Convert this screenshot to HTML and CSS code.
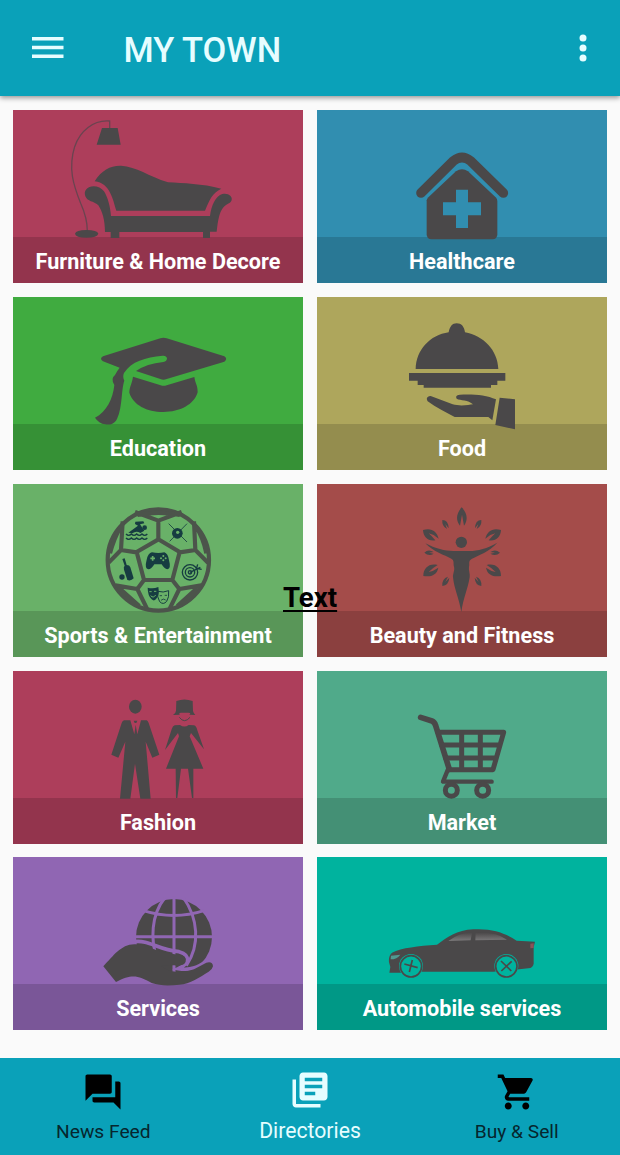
FILE: index.html
```html
<!DOCTYPE html>
<html lang="en">
<head>
  <meta charset="UTF-8">
  <title>My Town</title>
  <meta name="viewport" content="width=device-width, initial-scale=1.0">
  <link rel="stylesheet" href="styles.css">
</head>
<body>
  <header class="app-bar">
    <svg class="menu-icon" viewBox="0 0 32 22"><path d="M0 0h31.500v3.500H0zM0 8.800h31.500v3.500H0zM0 17.600h31.500v3.500H0z"/></svg>
    <h1>MY TOWN</h1>
    <svg class="more-icon" viewBox="0 0 8 28"><circle cx="4" cy="4" r="3.5"/><circle cx="4" cy="14" r="3.5"/><circle cx="4" cy="24" r="3.5"/></svg>
  </header>

  <main class="grid">
    <a class="tile crimson">
      <span class="label">Furniture &amp; Home Decore</span>
      <svg viewBox="9 15 870 519">
        <path class="line lamp-arm" d="M299 70V48C250 44 210 78 194 125C174 190 190 240 212 295Q232 340 232 378"/>
        <path d="M276 69H323L332 119H260ZM195 386Q198 375 229 375Q262 375 265 386Q262 398 229 398Q197 398 195 386Z"/>
        <path d="M254 229C275 195 302 181 333 182C380 185 415 213 474 232C520 235 575 236 634 251C607 263 598 285 585 317H319C309 286 301 234 254 229Z"/>
        <path d="M229 253C240 238 270 241 282 259C293 276 301 305 303 333H600C604 300 617 273 637 267C655 263 668 274 665 285C662 296 650 296 641 306C628 320 624 345 620 380H600V399H579V381H328V399H302V381H285C285 345 277 319 265 301C250 287 233 291 226 274C223 266 224 258 229 253Z"/>
      </svg>
    </a>

    <a class="tile blue">
      <span class="label">Healthcare</span>
      <svg viewBox="21 15 870 519">
        <path class="line" stroke-width="29" stroke-linecap="round" stroke-linejoin="round" d="M333 264L430 168Q456 147 482 168L580 264"/>
        <path d="M350 286Q351 281 355 277L438 199Q456 186 474 199L557 277Q562 282 562 288V388Q562 403 547 403H365Q350 403 350 388Z"/>
        <path class="cut" d="M438 254H474V292H513V331H474V369H438V331H399V292H438Z"/>
      </svg>
    </a>

    <a class="tile green">
      <span class="label">Education</span>
      <svg viewBox="9 21 870 519">
        <path d="M451 145Q460 141 470 145L643 199Q654 207 643 215L470 267Q460 271 451 267L378 243Q410 221 460 216Q471 214 471 205Q469 196 458 197C405 203 365 213 342 249Q337 260 343 272C333 300 338 360 318 392Q305 407 286 403Q266 400 255 383C290 366 309 325 313 285Q301 266 315 255Q323 240 329 233L279 214Q267 207 279 199Z"/>
        <path d="M369 260L452 286Q461 289 470 286L553 261C556 282 563 285 563 307C552 344 510 366 460 366C410 366 369 344 358 308C358 290 366 282 369 260Z"/>
      </svg>
    </a>

    <a class="tile olive">
      <span class="label">Food</span>
      <svg viewBox="21 21 870 519">
        <path d="M317 237C318 180 360 135 416 127C419 110 427 100 440 100C454 100 463 110 465 127C520 137 563 180 565 237ZM297 249H586V272H562V285H543V293H341V285H323V272H297Z"/>
        <path d="M353 334Q345 320 362 318L428 343C449 349 477 345 489 343C475 329 451 332 440 326Q434 316 450 314C490 312 528 315 558 328L547 391L535 381H434C409 367 378 353 353 334ZM569 323L615 328V418L556 405Z"/>
      </svg>
    </a>

    <a class="tile lightgreen">
      <span class="label">Sports &amp; Entertainment</span>
      <svg viewBox="-201 -18 870 519">
        <g class="line" stroke-width="12.5">
          <circle cx="235" cy="210" r="152"/>
          <path d="M235 148L299 186L277 270H192L170 186ZM235 148V92L165 66M235 92L305 66M128 94L123 180L170 187M123 180L86 218M342 94L346 180L299 187M346 180L384 218M192 270L172 297L106 286M172 297L201 356M277 270L298 297L364 286M298 297L269 356M123 108Q102 145 90 190M347 108Q370 145 379 190M172 75Q235 62 300 75M115 292L178 348M354 292L292 348"/>
        </g>
        <g class="sport">
          <path d="M145 128L174 107L165 102L166 95L190 94L193 100L180 103L193 122L181 129Q169 121 157 130Z"/><circle cx="194" cy="113" r="7"/>
          <path class="thin" d="M138 132q8 8 16 0q8 8 16 0q8 8 16 0q8 8 16 0M138 144q8 8 16 0q8 8 16 0q8 8 16 0q8 8 16 0"/>
          <circle cx="292" cy="130" r="16"/><path class="hair" d="M266 101L321 156M321 101L269 154"/><circle class="dot" cx="293" cy="127" r="5"/>
          <path d="M216 187Q235 191 253 187Q264 190 267 211Q274 236 262 238Q253 237 245 223H223Q214 238 205 238Q193 235 200 209Q204 190 216 187Z"/>
          <path class="pad" d="M218 198v14M211 205h14"/><g class="dot"><circle cx="250" cy="198" r="3"/><circle cx="250" cy="211" r="3"/><circle cx="243" cy="205" r="3"/><circle cx="257" cy="205" r="3"/></g>
          <path d="M127 207L134 205L140 225Q149 225 151 232L161 265Q153 274 142 270L132 239Q130 230 134 227Z"/><circle cx="126" cy="261" r="8"/>
          <g class="thin"><circle cx="330" cy="247" r="23"/><circle cx="330" cy="247" r="14"/><circle cx="330" cy="247" r="5"/><path d="M330 247L361 232M349 237L353 223M351 236L365 238"/></g>
          <path d="M203 293Q219 298 235 291Q239 312 230 325Q223 336 215 328Q203 317 203 293Z"/>
          <path class="mask" d="M234 304Q249 309 266 302Q268 322 260 334Q250 346 239 335Q230 321 234 304Z"/>
          <path class="hair" d="M239 317h7M254 316h7M243 331Q250 324 257 330"/>
          <path class="pad fine" d="M208 305h7M222 304h7M212 317Q220 326 227 315"/>
        </g>
      </svg>
    </a>

    <a class="tile red">
      <span class="label">Beauty and Fitness</span>
      <svg viewBox="111 12 870 519">
        <circle cx="544" cy="187" r="17"/>
        <path d="M436 190C468 207 499 214 524 213H564C590 214 620 206 652 188C626 216 597 225 576 236C563 243 570 252 567 260C565 270 571 282 569 292C563 329 551 350 544 396C536 350 523 329 519 292C518 281 525 271 522 260C519 250 524 241 514 236C493 225 461 216 436 190Z"/>
        <path d="M545 82C563 100 564 120 552 137L546 104L540 137C526 120 529 100 545 82Z"/>
        <path d="M429 150C453 142 471 153 476 176Q461 163 446 160Q454 167 466 181C444 185 430 170 429 150Z"/>
        <path d="M663 150C639 142 621 153 616 176Q631 163 646 160Q638 167 626 181C648 185 662 170 663 150Z"/>
        <path d="M430 288C430 265 446 249 473 255Q459 263 446 276Q461 273 475 263C471 285 452 292 430 288Z"/>
        <path d="M663 288C663 265 647 249 620 255Q634 263 647 276Q632 273 618 263C622 285 641 292 663 288Z"/>
        <path d="M487 120Q505 120 506 145L496 132L501 147Q485 139 487 120ZM604 120Q586 120 585 145L595 132L590 147Q606 139 604 120ZM433 218Q445 206 461 216L447 218L461 221Q447 230 433 218ZM660 218Q646 206 631 216L645 218L631 221Q647 230 660 218ZM487 318Q485 296 504 290L496 306L508 293Q506 316 487 318ZM604 318Q606 296 588 290L596 306L584 293Q586 316 604 318Z"/>
      </svg>
    </a>

    <a class="tile crimson">
      <span class="label">Fashion</span>
      <svg viewBox="9 17 870 519">
        <ellipse cx="376" cy="124" rx="19" ry="21"/>
        <path d="M342 165H361L373 207L377 178L382 207L393 165H410Q414 167 416 173L448 268L427 277L407 229L422 400H391L375 295L361 400H330L346 229L325 277L304 268L335 173Q337 167 342 165ZM371 166H382L379 173H374Z"/>
        <path d="M499 107Q523 98 548 107L549 137Q551 145 556 149L538 148Q545 142 535 142H512Q504 144 510 148L489 149Q497 145 498 136ZM494 180L510 179Q523 188 536 179L552 180Q559 182 562 195L582 252L543 203L539 213L580 310H468L507 213L504 203L465 254L485 192Q488 182 494 180ZM497 310H513L502 398H498ZM534 310H550V398H546Z"/>
        <path class="line" stroke-width="3" d="M508 156Q523 176 540 156"/>
      </svg>
    </a>

    <a class="tile mint">
      <span class="label">Market</span>
      <svg viewBox="21 17 870 519">
        <g class="line" stroke-width="15" stroke-linecap="round" stroke-linejoin="round">
          <path stroke-width="17" d="M332 156L366 167Q374 170 377 181L418 312"/>
          <path d="M384 201H581L549 313H418M395 239H567M407 278H557M455 203V312M511 203V312"/>
          <path stroke-width="13" d="M414 312L399 349H545"/>
          <circle cx="424" cy="375" r="18"/><circle cx="518" cy="375" r="18"/>
        </g>
      </svg>
    </a>

    <a class="tile purple">
      <span class="label">Services</span>
      <svg viewBox="9 22 870 519">
        <circle cx="492" cy="262" r="114"/>
        <path class="gap" d="M492 140V380M370 261H615M400 183Q492 212 582 183M464 145C424 195 420 270 442 330M521 145C563 205 572 285 529 348"/>
        <path class="gap wide" d="M372 276C420 270 440 300 507 306Q535 314 532 332Q528 347 505 357C550 365 572 346 596 331"/>
        <path d="M280 350C310 319 332 285 373 284C416 284 440 312 507 315Q531 318 527 336Q522 350 492 347L454 348C475 370 520 371 552 359L589 339Q608 334 609 350Q608 358 596 366C570 382 540 403 508 405C480 408 450 409 425 400C385 377 365 372 318 397Z"/>
      </svg>
    </a>

    <a class="tile teal">
      <span class="label">Automobile services</span>
      <svg viewBox="21 22 870 519">
        <defs>
          <linearGradient id="glass" x1="0" y1="0" x2="0" y2="1">
            <stop offset="0" stop-color="#4a4748"/>
            <stop offset="1" stop-color="#7c7a7b"/>
          </linearGradient>
        </defs>
        <path d="M238 369L241 352L237 338Q235 318 246 309C275 294 325 289 381 285C411 264 440 241 490 239C550 236 584 250 620 273Q650 274 675 276L671 292V342Q669 354 655 356L628 359L550 366H338L274 369Z"/>
        <path fill="url(#glass)" d="M415 274Q448 248 486 249L482 272ZM497 249Q558 246 591 270L496 272Z"/>
        <path class="lamp" d="M243 318L271 315Q261 329 242 329Z"/><path fill="#8b5359" d="M661 282L671 281V295L661 296Z"/>
        <g class="wheel">
          <circle cx="303" cy="349" r="36"/><circle cx="589" cy="349" r="36"/>
        </g>
        <g class="line" stroke-width="5">
          <circle cx="303" cy="350" r="32"/><circle cx="589" cy="350" r="32"/>
          <path d="M307 331L298 367M283 343L323 354M573 334L604 364M605 335L574 364"/>
        </g>
      </svg>
    </a>
  </main>

  <span class="overlay-text">Text</span>

  <nav class="bottom-nav">
    <a class="nav-item">
      <svg viewBox="0 0 24 24"><path d="M21 6h-2v9H6v2c0 .55.45 1 1 1h11l4 4V7c0-.55-.45-1-1-1zm-4 6V3c0-.55-.45-1-1-1H3c-.55 0-1 .45-1 1v14l4-4h10c.55 0 1-.45 1-1z"/></svg>
      <span>News Feed</span>
    </a>
    <a class="nav-item active">
      <svg viewBox="0 0 24 24"><path d="M4 6H2v14c0 1.100.9 2 2 2h14v-2H4V6zm16-4H8c-1.100 0-2 .9-2 2v12c0 1.100.9 2 2 2h12c1.100 0 2-.9 2-2V4c0-1.100-.9-2-2-2zm-1 9H9V9h10v2zm-4 4H9v-2h6v2zm4-8H9V5h10v2z"/></svg>
      <span>Directories</span>
    </a>
    <a class="nav-item">
      <svg viewBox="0 0 24 24"><path d="M7 18c-1.100 0-1.990.9-1.990 2S5.900 22 7 22s2-.9 2-2-.9-2-2-2zM1 2v2h2l3.600 7.590-1.350 2.450c-.16.28-.25.61-.25.96 0 1.100.9 2 2 2h12v-2H7.420c-.14 0-.25-.11-.25-.25l.03-.12.9-1.630h7.450c.75 0 1.410-.41 1.750-1.030l3.580-6.490c.08-.14.12-.31.12-.48 0-.55-.45-1-1-1H5.210l-.94-2H1zm16 16c-1.100 0-1.990.9-1.990 2s.89 2 1.990 2 2-.9 2-2-.9-2-2-2z"/></svg>
      <span>Buy &amp; Sell</span>
    </a>
  </nav>
</body>
</html>
```
FILE: styles.css
```css
* {
  box-sizing: border-box;
}

body {
  margin: 0;
  height: 1155px;
  display: flex;
  flex-direction: column;
  font-family: Roboto, sans-serif;
  background: #fafafa;
  position: relative;
}

.app-bar {
  height: 96px;
  flex: none;
  display: flex;
  align-items: center;
  padding: 0 33px 0 31.5px;
  background: #0aa1b9;
  box-shadow: 0 2px 5px rgba(0, 0, 0, 0.4);
}

.app-bar svg {
  fill: #e6fdff;
}

.menu-icon {
  width: 32px;
  height: 22px;
}

.app-bar h1 {
  flex: 1;
  margin: 3px 0 0 60px;
  font-size: 34.5px;
  font-weight: 500;
  line-height: 40px;
  color: #e6fdff;
}

.more-icon {
  width: 8px;
  height: 28px;
}

.grid {
  flex: 1;
  display: grid;
  grid-template-columns: 290px 290px;
  grid-auto-rows: 173px;
  gap: 13.8px 14px;
  padding: 14.2px 13px 0;
}

/* icon and label share one cell, the icon is drawn over the label strip */
.tile {
  --tile: #ad3e5b;
  display: grid;
  grid-template: 1fr / 1fr;
  background: var(--tile);
}

.tile > * {
  grid-area: 1 / 1;
}

.tile svg {
  width: 290px;
  height: 173px;
  fill: #4a4849;
}

.label {
  align-self: end;
  height: 46px;
  line-height: 49px;
  text-align: center;
  font-size: 21.6px;
  font-weight: 700;
  color: #fff;
  background: rgba(0, 0, 0, 0.15);
}

.blue { --tile: #318eb0; }
.green { --tile: #40ab40; }
.olive { --tile: #aea65c; }
.lightgreen { --tile: #69b168; }
.red { --tile: #a44c4a; }
.mint { --tile: #50aa8a; }
.purple { --tile: #9066b3; }
.teal { --tile: #00b39e; }

.line {
  fill: none;
  stroke: #4a4849;
}

.lamp-arm {
  stroke: #6a4450;
  stroke-width: 4px;
}

.cut,
.wheel {
  fill: var(--tile);
}

.gap {
  fill: none;
  stroke: var(--tile);
  stroke-width: 9;
}

.wide {
  stroke-width: 11;
}

.lamp {
  fill: #4f9990;
}

.lightgreen .line {
  stroke: #4c544b;
}

.sport {
  fill: #163c41;
}

.thin,
.hair,
.mask {
  fill: none;
  stroke: #163c41;
  stroke-width: 4;
}

.hair {
  stroke-width: 2.5;
}

.mask {
  stroke-width: 3;
}

.dot {
  fill: #69b168;
}

.pad {
  fill: none;
  stroke: #69b168;
  stroke-width: 5;
}

.fine {
  stroke-width: 3;
}

.overlay-text {
  position: absolute;
  top: 582px;
  left: 283px;
  font-size: 27.6px;
  font-weight: 700;
  line-height: 32px;
  text-decoration: underline;
  text-decoration-thickness: 2px;
  text-underline-offset: 3px;
  color: #000;
}

.bottom-nav {
  height: 97px;
  flex: none;
  display: flex;
  background: #0aa1b9;
}

.nav-item {
  flex: 1;
  display: flex;
  flex-direction: column;
  align-items: center;
  padding-top: 13px;
  font-size: 19.2px;
  line-height: 24px;
  color: #06262e;
}

.nav-item svg {
  width: 42px;
  height: 42px;
  fill: #000;
}

.nav-item span {
  margin-top: 7px;
}

.nav-item.active {
  padding-top: 11px;
  font-size: 21.2px;
  color: #e6fdff;
}

.nav-item.active svg {
  fill: #e6fdff;
}

.nav-item.active span {
  margin-top: 8px;
}
```
